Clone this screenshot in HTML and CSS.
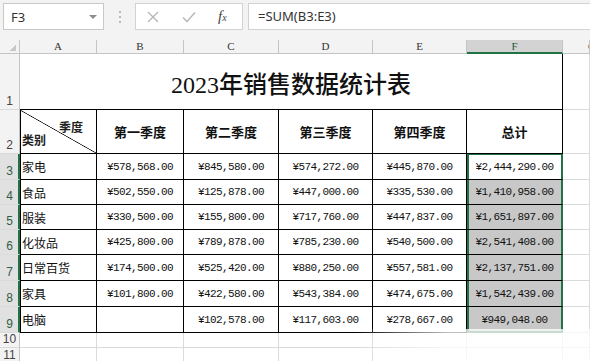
FILE: index.html
```html
<!DOCTYPE html>
<html>
    <head>
        <meta charset="utf-8">
        <link rel="stylesheet" href="styles.css">
    </head>
    <body>
        <div class="toolbar">
            <div class="namebox"><span>F3</span><span class="caret"></span></div>
            <div class="grip"><i></i><i></i><i></i></div>
            <div class="fxbox">
                <svg class="ico" width="12" height="12" viewBox="0 0 12 12"><path d="M1 1L11 11M11 1L1 11" stroke="#b4b4b4" stroke-width="1.3" fill="none"/></svg>
                <svg class="ico" width="14" height="12" viewBox="0 0 14 12"><path d="M1 6.5L5 10.5L13 1.5" stroke="#b4b4b4" stroke-width="1.3" fill="none"/></svg>
                <span class="fx">f<small>x</small></span>
            </div>
            <div class="formula">=SUM(B3:E3)</div>
        </div>

        <div class="sheet">
            <!-- column headers -->
            <div class="corner"></div>
            <div class="colhd">A</div>
            <div class="colhd">B</div>
            <div class="colhd">C</div>
            <div class="colhd">D</div>
            <div class="colhd">E</div>
            <div class="colhd on">F</div>
            <div class="colhd cut">G</div>

            <!-- row 1 -->
            <div class="rowhd">1</div>
            <div class="title t">2023年销售数据统计表</div>
            <div></div>

            <!-- row 2 -->
            <div class="rowhd">2</div>
            <div class="t a diag"><span class="q">季度</span><span class="k">类别</span></div>
            <div class="c t h">第一季度</div>
            <div class="c t h">第二季度</div>
            <div class="c t h">第三季度</div>
            <div class="c t h">第四季度</div>
            <div class="c t h">总计</div>
            <div></div>

            <!-- rows 3-9 -->
            <div class="rowhd on">3</div>
            <div class="c t a">家电</div>
            <div class="c t">¥578,568.00</div>
            <div class="c t">¥845,580.00</div>
            <div class="c t">¥574,272.00</div>
            <div class="c t">¥445,870.00</div>
            <div class="c t fs top">¥2,444,290.00</div>
            <div></div>

            <div class="rowhd on">4</div>
            <div class="c t a">食品</div>
            <div class="c t">¥502,550.00</div>
            <div class="c t">¥125,878.00</div>
            <div class="c t">¥447,000.00</div>
            <div class="c t">¥335,530.00</div>
            <div class="c t fs grey">¥1,410,958.00</div>
            <div></div>

            <div class="rowhd on">5</div>
            <div class="c t a">服装</div>
            <div class="c t">¥330,500.00</div>
            <div class="c t">¥155,800.00</div>
            <div class="c t">¥717,760.00</div>
            <div class="c t">¥447,837.00</div>
            <div class="c t fs grey">¥1,651,897.00</div>
            <div></div>

            <div class="rowhd on">6</div>
            <div class="c t a">化妆品</div>
            <div class="c t">¥425,800.00</div>
            <div class="c t">¥789,878.00</div>
            <div class="c t">¥785,230.00</div>
            <div class="c t">¥540,500.00</div>
            <div class="c t fs grey">¥2,541,408.00</div>
            <div></div>

            <div class="rowhd on">7</div>
            <div class="c t a">日常百货</div>
            <div class="c t">¥174,500.00</div>
            <div class="c t">¥525,420.00</div>
            <div class="c t">¥880,250.00</div>
            <div class="c t">¥557,581.00</div>
            <div class="c t fs grey">¥2,137,751.00</div>
            <div></div>

            <div class="rowhd on">8</div>
            <div class="c t a">家具</div>
            <div class="c t">¥101,800.00</div>
            <div class="c t">¥422,580.00</div>
            <div class="c t">¥543,384.00</div>
            <div class="c t">¥474,675.00</div>
            <div class="c t fs grey">¥1,542,439.00</div>
            <div></div>

            <div class="rowhd on">9</div>
            <div class="c t a">电脑</div>
            <div class="c t"></div>
            <div class="c t">¥102,578.00</div>
            <div class="c t">¥117,603.00</div>
            <div class="c t">¥278,667.00</div>
            <div class="c t fs grey bot">¥949,048.00</div>
            <div></div>

            <!-- rows 10-11 -->
            <div class="rowhd">10</div>
            <div></div><div></div><div></div><div></div><div></div><div></div><div></div>
            <div class="rowhd">11</div>
            <div></div><div></div><div></div><div></div><div></div><div></div><div></div>
        </div>

        <div class="fade"></div>
    </body>
</html>
```

FILE: styles.css
```css
body {
    margin: 0;
    width: 590px;
    height: 361px;
    overflow: hidden;
    position: relative;
    background: #fff;
    font-family: "Noto Sans", "Noto Sans CJK SC", sans-serif;
    color: #222;
}

/* formula bar */
.toolbar {
    height: 40px;
    box-sizing: border-box;
    background: #f3f3f3;
    display: flex;
    align-items: flex-start;
    padding: 3px 0 0 3px;
}
.namebox {
    width: 101px;
    height: 27px;
    box-sizing: border-box;
    background: #fff;
    border: 1px solid #c9c9c9;
    display: flex;
    align-items: center;
    justify-content: space-between;
    padding: 0 6px 0 7px;
    font-size: 13px;
    color: #333;
}
.caret {
    border-left: 4px solid transparent;
    border-right: 4px solid transparent;
    border-top: 4px solid #8c8c8c;
}
.grip {
    width: 31px;
    display: flex;
    flex-direction: column;
    align-items: center;
    gap: 3px;
    padding-top: 8px;
}
.grip i { width: 2px; height: 2px; background: #b9b9b9; }
.fxbox {
    width: 108px;
    height: 27px;
    box-sizing: border-box;
    background: #fff;
    border: 1px solid #d2d2d2;
    display: flex;
    align-items: center;
    padding-left: 11px;
}
.fxbox .ico:nth-child(2) { margin-left: 23px; }
.fx {
    margin-left: 22px;
    font-family: "Liberation Serif", serif;
    font-style: italic;
    font-size: 15px;
    color: #444;
}
.fx small { font-size: 10px; }
.formula {
    flex: 1;
    height: 27px;
    box-sizing: border-box;
    margin-left: 5px;
    background: #fff;
    border: 1px solid #d2d2d2;
    border-right: none;
    padding-left: 9px;
    font-size: 13px;
    line-height: 25px;
    color: #333;
}

/* sheet grid */
.sheet {
    display: grid;
    grid-template-columns: 20px 77px 87px 95px 94px 94px 96px 1fr;
    grid-template-rows: 14px 56px 44px 26px 25px 25px 25px 26px 26px 26px 15px 1fr;
    height: 321px;
}
.sheet > div {
    box-sizing: border-box;
    min-width: 0;
    border-right: 1px solid #dadada;
    border-bottom: 1px solid #dadada;
}
.corner {
    background: #f3f3f3 linear-gradient(135deg, transparent 50%, #c8c8c8 50%) no-repeat right 3px bottom 2px / 7px 7px;
}
.sheet > .corner, .sheet > .colhd { border-bottom-color: #c4c4c4; border-right-color: #c4c4c4; }
.colhd {
    background: #f3f3f3;
    text-align: center;
    font: 11px/13px "Liberation Serif", serif;
    color: #333;
}
.colhd.cut {
    text-align: left;
    padding-left: 25px;
    overflow: hidden;
}
.sheet > .colhd.on {
    background: #d3d3d3;
    border-bottom: 2px solid #217346;
    color: #1d5b3b;
}
.sheet > .rowhd {
    background: #f3f3f3;
    border-right-color: #c4c4c4;
    display: flex;
    align-items: flex-end;
    justify-content: center;
    font: 12px/15px "Liberation Sans", sans-serif;
    color: #444;
}
.sheet > .rowhd.on {
    background: #e1e1e1;
    border-right-color: #217346;
    box-shadow: inset -1px 0 #217346;
    color: #2f5e46;
}

/* table cells */
.c {
    display: flex;
    align-items: center;
    justify-content: center;
    font: 11px "Liberation Mono", monospace;
    letter-spacing: -0.6px;
    color: #111;
    white-space: nowrap;
}
.sheet > .t { border-right-color: #000; border-bottom-color: #000; }
.a {
    box-shadow: inset 1px 0 #000;
}
.c.a {
    justify-content: flex-start;
    padding-left: 2px;
    font: 12px "Noto Sans CJK SC", sans-serif;
    letter-spacing: 0;
}
.c.h {
    font: bold 13px "Noto Sans CJK SC", sans-serif;
    letter-spacing: 0;
}
.title {
    grid-column: 2 / 8;
    display: flex;
    align-items: center;
    justify-content: center;
    font: 500 24px "Liberation Serif", "Noto Sans CJK SC", serif;
    color: #111;
    padding-top: 1px;
}
.diag {
    position: relative;
    background: linear-gradient(to top right, transparent calc(50% - 0.7px), #000 50%, transparent calc(50% + 0.7px));
    font: bold 12px "Noto Sans CJK SC", sans-serif;
}
.diag .q { position: absolute; right: 13px; top: 8px; }
.diag .k { position: absolute; left: 2px; bottom: 5px; }

/* selection F3:F9 */
.grey { background: #c8c8c8; }
.sheet > .fs {
    border-right-color: #217346;
    box-shadow: inset 2px 0 #217346, inset -1px 0 #217346;
}
.sheet > .fs.top { box-shadow: inset 2px 0 #217346, inset -1px 0 #217346, inset 0 1px #217346; }
.sheet > .fs.bot { border-bottom-color: #217346; box-shadow: inset 2px 0 #217346, inset -1px 0 #217346, inset 0 -1px #217346; }

.fade {
    position: absolute;
    left: 355px;
    right: 0;
    bottom: 0;
    height: 32px;
    background: linear-gradient(to right, rgba(255,255,255,0), rgba(255,255,255,0.75) 40%);
    pointer-events: none;
}
```
